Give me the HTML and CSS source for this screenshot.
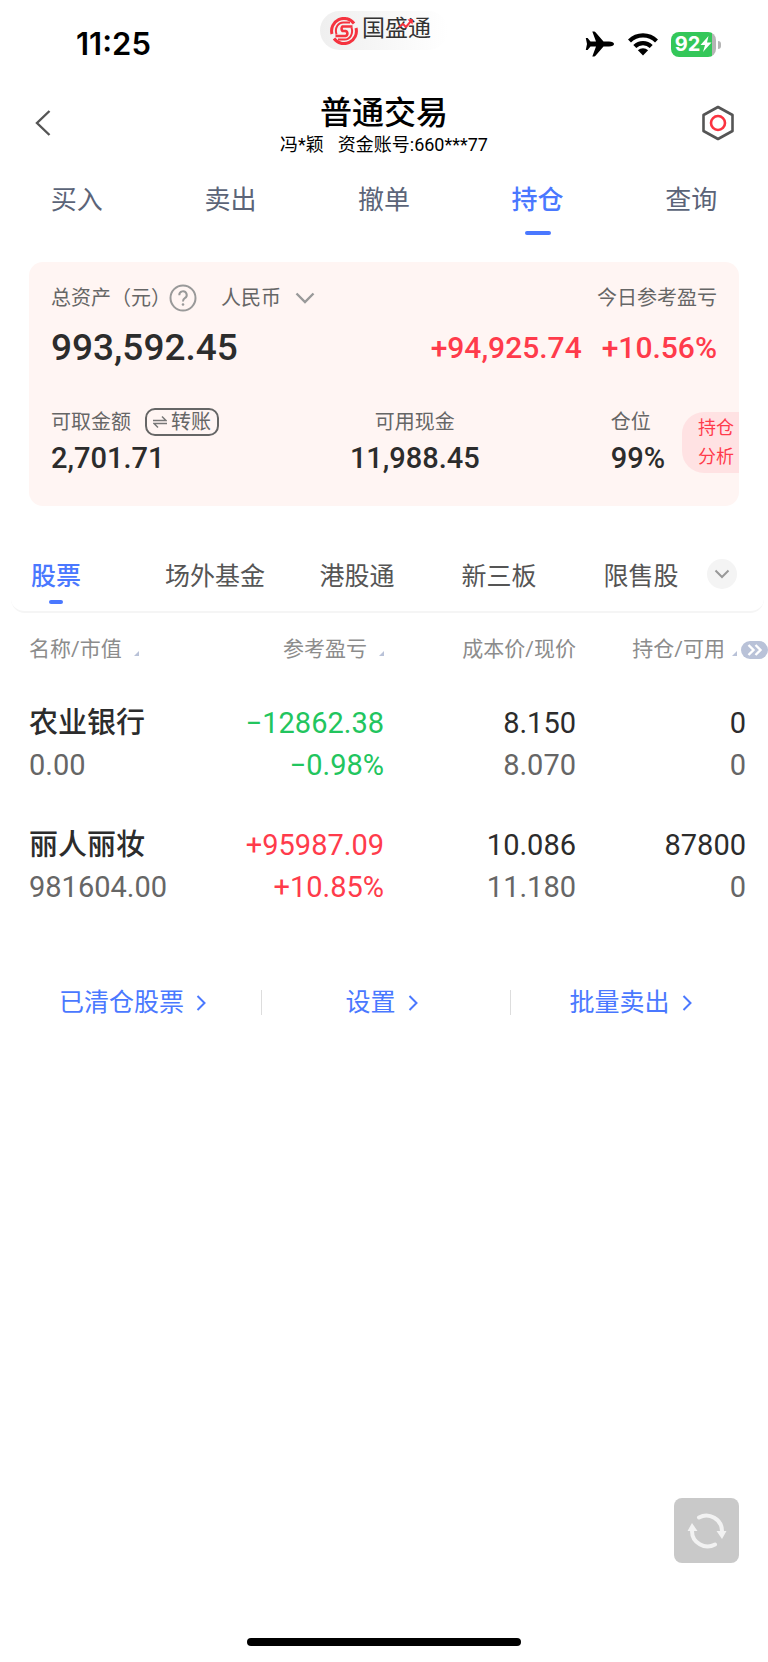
FILE: index.html
```html
<!DOCTYPE html>
<html lang="zh-hans">
<head>
    <meta charset="UTF-8">
    <title>普通交易</title>
    <meta content="width=device-width, initial-scale=1" name="viewport">
    <link rel="stylesheet" href="styles.css">
</head>
<body>
<div class="container">
    <div class="status">
        <div class="time">11:25</div>
        <div class="brand">
            <svg width="28" height="28" viewBox="0 0 28 28" fill="none" stroke="#f5333f" stroke-width="3">
                <path d="M2 17A12.400 12.400 0 0 1 24 6.500M26 11A12.400 12.400 0 0 1 4 21.500"/>
                <path d="M22.500 9.500H12.500A3.200 3.200 0 0 0 12.500 14H15.500A2.600 2.600 0 0 1 15.500 19H5.500" stroke-width="2.600"/>
                <path d="M6.500 17.500C4.500 11 8 5.500 13.500 5.500H20M21.500 10.500C23.500 17 20 22.500 14.500 22.500H8" stroke-width="2"/>
            </svg>
            <span>国盛通</span>
            <svg class="rise" width="16" height="12" viewBox="0 0 16 12" fill="none" stroke="#f5333f" stroke-width="2">
                <path d="M1 9L5 6L8 9L13 3"/>
                <path d="M9.500 1.500L15 1L14.500 6.500Z" fill="#f5333f" stroke-width="0"/>
            </svg>
        </div>
        <div class="signal">
            <svg width="30" height="26" viewBox="0 0 30 26">
                <path d="M29 13C29 11.500 27 10.600 24 10.600H18.500L10.500 1.200Q10 .6 9.200 .6H7.300L11 10.600H5.500L2.600 7H.8L2 13L.8 19H2.600L5.500 15.400H11L7.300 25.400H9.200Q10 25.400 10.500 24.800L18.500 15.400H24C27 15.400 29 14.500 29 13Z"/>
            </svg>
            <svg width="32" height="24" viewBox="0 0 32 24" fill="none" stroke="#000" stroke-width="4.200">
                <path d="M2.500 9A19.200 19.200 0 0 1 29.500 9"/>
                <path d="M7.800 14.500A11.600 11.600 0 0 1 24.200 14.500"/>
                <path d="M16 23.500L10.900 18.200A7.400 7.400 0 0 1 21.100 18.200Z" fill="#000" stroke="none"/>
            </svg>
            <div class="battery">
                <span>92</span>
                <svg width="12" height="16" viewBox="0 0 12 16"><path d="M8.500 0L.5 9H5L3 16L11.500 6.500H7Z" fill="#fff"/></svg>
            </div>
        </div>
    </div>

    <header class="header">
        <button class="back" aria-label="返回">
            <svg width="18" height="28" viewBox="0 0 18 28" fill="none" stroke="#555" stroke-width="2.400"><path d="M16.500 2L4 14L16.500 26"/></svg>
        </button>
        <div class="heading">
            <h1>普通交易</h1>
            <p><span>冯*颖</span><span>资金账号:660***77</span></p>
        </div>
        <button class="setting" aria-label="交易设置">
            <svg width="34" height="36" viewBox="0 0 34 36" fill="none">
                <path d="M17 2L31.500 10V26L17 34L2.500 26V10Z" stroke="#555" stroke-width="2.600" stroke-linejoin="round"/>
                <circle cx="17" cy="18" r="7" stroke="#fb3340" stroke-width="2.600"/>
            </svg>
        </button>
    </header>

    <nav class="menu">
        <a href="#buy">买入</a>
        <a href="#sell">卖出</a>
        <a href="#cancel">撤单</a>
        <a href="#hold" class="active">持仓</a>
        <a href="#query">查询</a>
    </nav>

    <section class="card">
        <div class="card-head">
            <span class="asset">总资产（元）</span>
            <button class="help" aria-label="说明">
                <svg width="28" height="28" viewBox="0 0 28 28" fill="none" stroke="#999" stroke-width="2">
                    <circle cx="14" cy="14" r="12.500"/>
                    <path d="M10.300 11.200A3.700 3.700 0 1 1 15.800 14.200C14.500 15 14 15.600 14 17.500"/>
                    <circle cx="14" cy="20.500" r="1.300" fill="#999" stroke="none"/>
                </svg>
            </button>
            <button class="currency">人民币
                <svg width="20" height="12" viewBox="0 0 20 12" fill="none" stroke="#999" stroke-width="2.400"><path d="M1.500 1.500L10 10L18.500 1.500"/></svg>
            </button>
            <span class="today">今日参考盈亏</span>
        </div>
        <div class="total">
            <strong>993,592.45</strong>
            <span class="red">+94,925.74</span>
            <span class="red">+10.56%</span>
        </div>
        <div class="funds">
            <div>
                <p class="label">可取金额
                    <button class="transfer">
                        <svg width="14" height="14" viewBox="0 0 14 14" fill="none" stroke="#777" stroke-width="1.500"><path d="M0 5.500H13L9 1.500M14 8.500H1L5 12.500"/></svg>
                        转账
                    </button>
                </p>
                <p class="value">2,701.71</p>
            </div>
            <div class="cash">
                <p class="label">可用现金</p>
                <p class="value">11,988.45</p>
            </div>
            <div>
                <p class="label">仓位</p>
                <p class="value">99%</p>
            </div>
        </div>
        <button class="analysis">持仓<br>分析</button>
    </section>

    <nav class="types">
        <a href="#stock" class="active">股票</a>
        <a href="#fund">场外基金</a>
        <a href="#hk">港股通</a>
        <a href="#neeq">新三板</a>
        <a href="#limit">限售股</a>
        <button class="more" aria-label="更多">
            <svg width="16" height="10" viewBox="0 0 16 10" fill="none" stroke="#999" stroke-width="2"><path d="M1.500 1.500L8 8L14.500 1.500"/></svg>
        </button>
    </nav>

    <table class="hold">
        <thead>
        <tr>
            <th>名称/市值<i class="sort"></i></th>
            <th>参考盈亏<i class="sort"></i></th>
            <th>成本价/现价</th>
            <th>持仓/可用<i class="sort"></i><button class="next" aria-label="更多列"><svg width="16" height="12" viewBox="0 0 16 12" fill="none" stroke="#fff" stroke-width="2.400"><path d="M1.500 1L6.500 6L1.500 11M8.500 1L13.500 6L8.500 11"/></svg></button></th>
        </tr>
        </thead>
        <tbody>
        <tr>
            <td><b>农业银行</b><span>0.00</span></td>
            <td class="green">−12862.38<span>−0.98%</span></td>
            <td>8.150<span>8.070</span></td>
            <td>0<span>0</span></td>
        </tr>
        <tr>
            <td><b>丽人丽妆</b><span>981604.00</span></td>
            <td class="red">+95987.09<span>+10.85%</span></td>
            <td>10.086<span>11.180</span></td>
            <td>87800<span>0</span></td>
        </tr>
        </tbody>
    </table>

    <div class="links">
        <a href="#cleared">已清仓股票<svg width="10" height="16" viewBox="0 0 10 16"><path d="M1.500 1L8.500 8L1.500 15"/></svg></a>
        <a href="#config">设置<svg width="10" height="16" viewBox="0 0 10 16"><path d="M1.500 1L8.500 8L1.500 15"/></svg></a>
        <a href="#batch">批量卖出<svg width="10" height="16" viewBox="0 0 10 16"><path d="M1.500 1L8.500 8L1.500 15"/></svg></a>
    </div>

    <div class="bottom">
        <button class="refresh" aria-label="刷新">
            <svg width="40" height="36" viewBox="0 0 40 36" fill="none" stroke="#f2f2f2" stroke-width="4" stroke-linecap="round">
                <path d="M12 4.500C22 -1 35 6 35 18"/>
                <path d="M28 31.500C18 37 5 30 5 18"/>
                <path d="M29.500 18H39.500L35 26ZM.5 18H10.500L5 10Z" fill="#f2f2f2" stroke="none"/>
            </svg>
        </button>
        <div class="home"></div>
    </div>
</div>
</body>
</html>
```
FILE: styles.css
```css
* {
    box-sizing: border-box;
}

body {
    margin: 0;
    background-color: #fff;
    color: #2c2c2c;
    font-family: Roboto, "Noto Sans CJK SC", sans-serif;
}

h1, p {
    margin: 0;
}

a {
    text-decoration: none;
}

button {
    padding: 0;
    border: 0;
    background: none;
    color: inherit;
    font: inherit;
}

svg {
    display: block;
    flex: none;
}

.red {
    color: #ff3b4b;
}

.green {
    color: #22c55e;
}

.container {
    display: flex;
    flex-direction: column;
    min-height: 100vh;
}

/* 状态栏 */
.status {
    display: grid;
    grid-template-columns: 1fr auto 1fr;
    height: 88px;
    padding: 0 46px 0 76px;
    color: #000;
}

.time {
    font: 600 31px/88px Inter, sans-serif;
}

.brand {
    position: relative;
    display: flex;
    align-items: center;
    gap: 4px;
    width: 128px;
    height: 39px;
    margin: 11px 30px 0 0;
    padding-left: 10px;
    border-radius: 20px;
    background: linear-gradient(90deg, #efefef, #fff);
    color: #333;
    font-size: 23px;
    line-height: 32px;
}

.brand span {
    padding-bottom: 4px;
}

.rise {
    position: absolute;
    left: 78px;
    top: 7px;
}

.signal {
    display: flex;
    align-items: center;
    justify-content: flex-end;
    gap: 12px;
}

.battery {
    position: relative;
    display: flex;
    align-items: center;
    justify-content: center;
    width: 45px;
    height: 25px;
    margin-right: 6px;
    border-radius: 8px;
    background: linear-gradient(90deg, #34c759 92%, #b5b5b5 92%);
    color: #fff;
    font: 700 20px/25px Inter, sans-serif;
}

.battery:after {
    content: "";
    position: absolute;
    right: -5px;
    top: 9px;
    width: 3px;
    height: 8px;
    border-radius: 0 4px 4px 0;
    background-color: #b5b5b5;
}

/* 标题 */
.header {
    display: flex;
    align-items: center;
    justify-content: space-between;
    padding: 5px 33px 0;
    color: #000;
    text-align: center;
}

.back, .setting {
    display: flex;
    width: 34px;
    padding-bottom: 4px;
}

.header h1 {
    font-size: 32px;
    line-height: 40px;
    font-weight: 500;
}

.header p {
    display: flex;
    gap: 14px;
    font-size: 18px;
    line-height: 24px;
}

.menu {
    display: flex;
    margin-top: 25px;
    text-align: center;
    font-size: 26px;
    line-height: 36px;
}

.menu a {
    flex: 1;
    color: #5b6478;
}

.menu a:after {
    content: "";
    display: block;
    width: 26px;
    height: 4px;
    margin: 13px auto 0;
    border-radius: 2px;
}

.menu .active, .types .active {
    color: #4a78ff;
    font-weight: 500;
}

.menu .active:after, .types .active:after {
    background-color: #4a78ff;
}

/* 资产 */
.card {
    position: relative;
    margin: 27px 29px 0;
    padding: 22px 22px 30px;
    border-radius: 14px;
    background-color: #fff5f3;
    overflow: hidden;
}

.card-head {
    display: flex;
    align-items: center;
    color: #666;
    font-size: 20px;
    line-height: 28px;
}

.asset {
    margin-right: -2px;
}

.currency {
    display: flex;
    align-items: center;
    gap: 14px;
    margin-left: 24px;
}

.today {
    margin-left: auto;
}

.total {
    display: flex;
    align-items: center;
    gap: 20px;
    margin-top: 14px;
    font-size: 30px;
    line-height: 44px;
    font-weight: 500;
}

.total strong {
    margin-right: auto;
    font-size: 37px;
    font-weight: 500;
}

.funds {
    display: flex;
    justify-content: space-between;
    margin-top: 38px;
    padding-right: 52px;
}

.label {
    display: flex;
    color: #666;
    font-size: 20px;
    line-height: 28px;
}

.cash .label {
    justify-content: center;
}

.value {
    margin-top: 4px;
    font-size: 29px;
    line-height: 36px;
    font-weight: 500;
}

.transfer {
    display: flex;
    align-items: center;
    gap: 4px;
    height: 28px;
    margin-left: 14px;
    padding: 0 6px;
    border: 2px solid #666;
    border-radius: 10px;
    line-height: 24px;
}

.analysis {
    position: absolute;
    right: 0;
    bottom: 33px;
    padding: 1px 5px 2px 16px;
    border-radius: 22px 0 0 22px;
    background-color: #ffe2e3;
    color: #ff3b4b;
    font-size: 18px;
    line-height: 29px;
}

/* 持仓类型 */
.types {
    position: relative;
    display: flex;
    margin: 53px 4px 0 11px;
    padding-right: 52px;
    border-bottom: 2px solid #f5f5f5;
    border-radius: 0 0 14px 14px;
    text-align: center;
    font-size: 25px;
    line-height: 36px;
}

.types a {
    flex: 1;
    color: #555;
}

.types a:first-child {
    flex: 0 1 133px;
    padding: 0 63px 0 20px;
}

.types a:after {
    content: "";
    display: block;
    width: 14px;
    height: 4px;
    margin: 5px auto 7px;
    border-radius: 2px;
}

.more {
    position: absolute;
    right: 27px;
    top: 0;
    display: flex;
    align-items: center;
    justify-content: center;
    width: 30px;
    height: 30px;
    border-radius: 50%;
    background-color: #f4f4f4;
}

.hold {
    width: 100%;
    margin-top: 20px;
    border-collapse: collapse;
    table-layout: fixed;
    text-align: right;
    font-size: 29px;
    line-height: 42px;
}

.hold th {
    padding: 0 0 37px;
    color: #8c8c8c;
    font-size: 21px;
    line-height: 32px;
    font-weight: 400;
    white-space: nowrap;
}

.hold td {
    padding: 0 0 38px;
}

.hold th:first-child, .hold td:first-child {
    padding-left: 29px;
    text-align: left;
}

.hold td:last-child {
    padding-right: 22px;
}

.hold b {
    display: block;
    font-weight: 500;
}

.hold span {
    display: block;
    color: #666;
}

.hold .red span, .hold .green span {
    color: inherit;
}

.sort {
    display: inline-block;
    margin-left: 12px;
    border-left: 5px solid transparent;
    border-bottom: 5px solid #b9c2d8;
}

th:last-child .sort {
    margin-left: 7px;
}

.next {
    display: inline-flex;
    align-items: center;
    justify-content: center;
    width: 27px;
    height: 18px;
    margin-left: 4px;
    border-radius: 9px;
    background-color: #b9c2d8;
    vertical-align: middle;
}

.links {
    display: flex;
    margin: 39px 9px 0 12px;
    font-size: 25px;
    line-height: 36px;
}

.links a {
    position: relative;
    flex: 1;
    display: flex;
    align-items: center;
    justify-content: center;
    gap: 12px;
    padding-right: 8px;
    color: #4a78ff;
}

.links a + a:before {
    content: "";
    position: absolute;
    left: 0;
    top: 5px;
    width: 1px;
    height: 25px;
    background-color: #ddd;
}

.links svg {
    fill: none;
    stroke: #4a78ff;
    stroke-width: 2;
}

.bottom {
    margin-top: auto;
    padding: 40px 29px 16px;
}

.refresh {
    display: flex;
    align-items: center;
    justify-content: center;
    width: 65px;
    height: 65px;
    margin-left: auto;
    border-radius: 8px;
    background-color: #c9c9c9;
}

.home {
    width: 274px;
    height: 8px;
    margin: 75px auto 0;
    border-radius: 4px;
    background-color: #000;
}
```
